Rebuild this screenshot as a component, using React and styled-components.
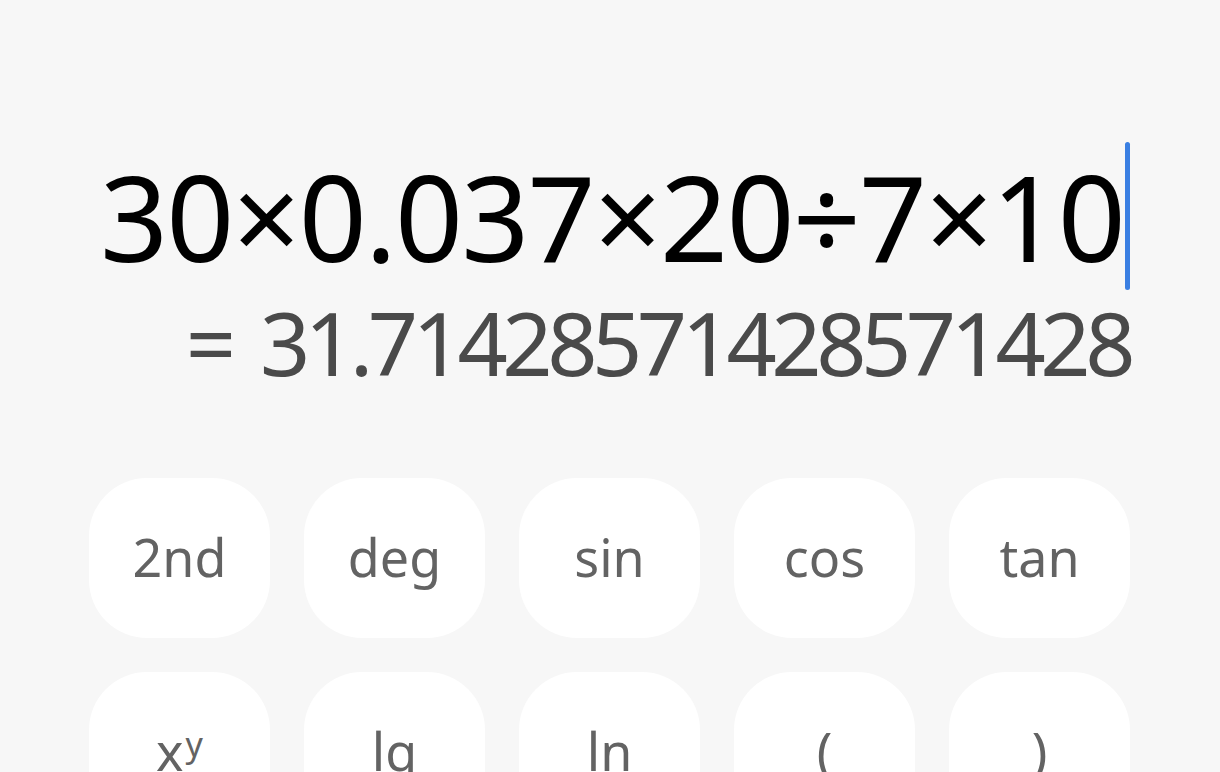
import styled, { createGlobalStyle } from 'styled-components';

const keys = [
    { label: '2nd' },
    { label: 'deg' },
    { label: 'sin' },
    { label: 'cos' },
    { label: 'tan' },
    { label: 'x', sup: 'y' },
    { label: 'lg' },
    { label: 'ln' },
    { label: '(' },
    { label: ')' },
];

export default function App(){
    return(
        <>
            <Global />
            <Screen>
                <Display>
                    <ExpressionLine>
                        <Expression>30×0.037×20÷7×10</Expression>
                        <Cursor />
                    </ExpressionLine>
                    <Result>
                        <Equals>=</Equals>
                        31.71428571428571428
                    </Result>
                </Display>
                <Keypad>
                    {
                        keys.map((k)=>(
                            <Key key={ k.label }>
                                { k.label }
                                { k.sup && <Sup>{ k.sup }</Sup> }
                            </Key>
                        ))
                    }
                </Keypad>
            </Screen>
        </>
    );
}

const Global = createGlobalStyle`
    html, body {
        margin: 0;
        padding: 0;
        background: #f7f7f7;
        overflow: hidden;
    }
`;

const Screen = styled.div`
    width: 1220px;
    height: 772px;
    box-sizing: border-box;
    padding: 0 90px 0 89px;
    background: #f7f7f7;
    font-family: "Noto Sans", "Liberation Sans", sans-serif;
    overflow: hidden;
`;

const Display = styled.div`
    display: flex;
    flex-direction: column;
    align-items: flex-end;
    padding-top: 142px;
`;

const ExpressionLine = styled.div`
    display: flex;
    align-items: center;
    height: 148px;
`;

const Expression = styled.div`
    font-size: 119px;
    line-height: 148px;
    color: #000;
    letter-spacing: -1.8px;
    margin-right: 1px;
    white-space: nowrap;
`;

const Cursor = styled.div`
    width: 5px;
    height: 148px;
    border-radius: 3px;
    background: #3a7fe2;
`;

const Result = styled.div`
    display: flex;
    align-items: baseline;
    font-size: 88px;
    line-height: 100px;
    color: #4a4a4a;
    letter-spacing: -5.5px;
    margin-top: 2px;
    white-space: nowrap;
`;

const Equals = styled.span`
    letter-spacing: 0;
    margin-right: 24px;
`;

const Keypad = styled.div`
    display: grid;
    grid-template-columns: repeat(5, 181px);
    grid-auto-rows: 160px;
    gap: 34px;
    margin-top: 86px;
`;

const Key = styled.div`
    display: flex;
    justify-content: center;
    align-items: center;
    background: #fff;
    border-radius: 58px;
    font-size: 52px;
    color: #636363;
    padding-bottom: 4px;
`;

const Sup = styled.sup`
    font-size: 34px;
    position: relative;
    top: -6px;
    margin-left: 2px;
`;
